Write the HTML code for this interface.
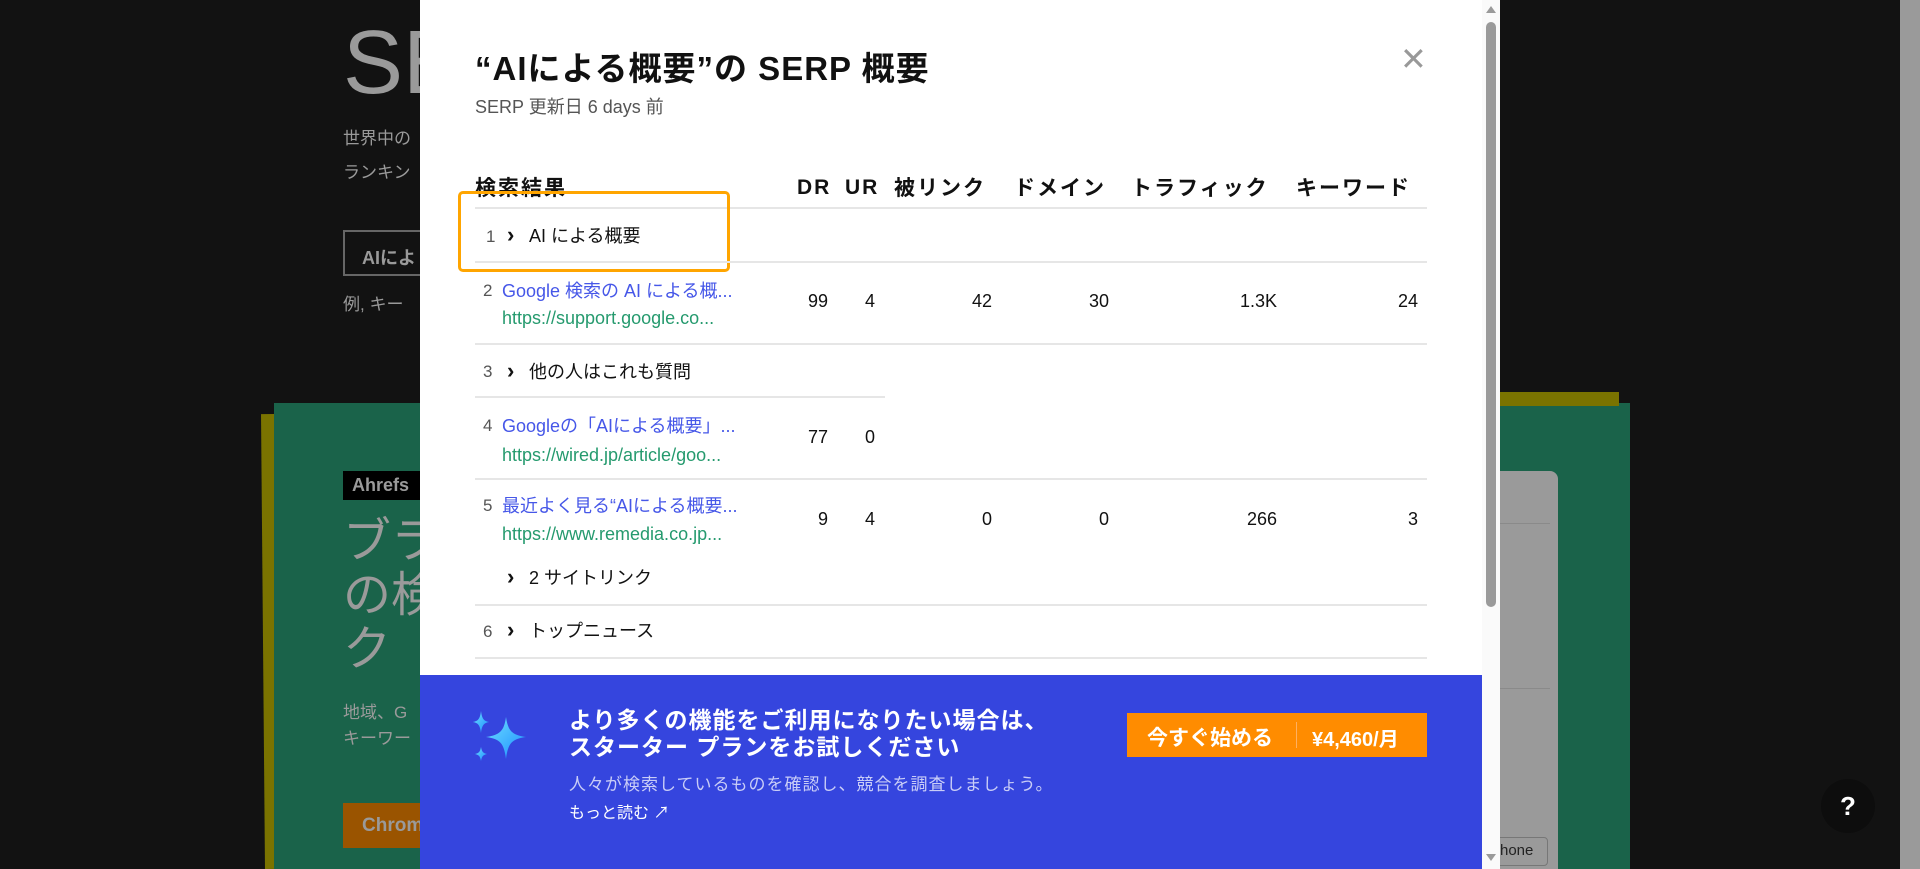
<!DOCTYPE html>
<html><head><meta charset="utf-8"><style>
*{margin:0;padding:0;box-sizing:border-box}
body{width:1920px;height:869px;overflow:hidden;background:#121212;position:relative;font-family:"Liberation Sans","Noto Sans CJK JP",sans-serif}
.a{position:absolute;white-space:nowrap}
.g{color:#9a9a9a}
.modal{position:absolute;left:420px;top:0;width:1062px;height:869px;background:#fff}
.hd{font-weight:bold;font-size:21px;color:#111;top:172px;letter-spacing:2px}
.ln{position:absolute;left:55px;width:952px;height:2px;background:#e6e6e6}
.t{font-size:18px;color:#111}
.num{font-size:17px;color:#555}
.lk{font-size:18px;color:#4657e8}
.ur{font-size:18px;color:#259a6e}
.v{font-size:18px;color:#111;text-align:right;width:80px}
.chev{font-size:22px;font-weight:bold;color:#111;line-height:22px}
</style></head><body>
<div class="a g" style="left:343px;top:12px;font-size:90px;">SE</div>
<div class="a g" style="left:343px;top:124px;font-size:17px">世界中の</div>
<div class="a g" style="left:343px;top:158px;font-size:17px">ランキン</div>
<div class="a" style="left:343px;top:230px;width:100px;height:46px;border:2px solid #666"></div>
<div class="a g" style="left:362px;top:244px;font-size:18px;font-weight:bold">AIによ</div>
<div class="a g" style="left:343px;top:290px;font-size:17px">例, キー</div>
<div class="a" style="left:263px;top:414px;width:14px;height:455px;background:#7a7300;transform:rotate(-0.5deg)"></div>
<div class="a" style="left:274px;top:403px;width:1356px;height:466px;background:#1a634a"></div>
<div class="a" style="left:1500px;top:392px;width:119px;height:14px;background:#7a7300"></div>
<div class="a" style="left:343px;top:471px;width:80px;height:29px;background:#000"></div>
<div class="a g" style="left:352px;top:475px;font-size:18px;font-weight:bold">Ahrefs</div>
<div class="a g" style="left:343px;top:515px;font-size:48px;line-height:54px">ブラ<br>の検<br>ク</div>
<div class="a g" style="left:343px;top:700px;font-size:17px;line-height:26px">地域、G<br>キーワー</div>
<div class="a" style="left:343px;top:803px;width:100px;height:45px;background:#9a5400"></div>
<div class="a g" style="left:362px;top:815px;font-size:19px;font-weight:bold">Chrom</div>
<div class="a" style="left:1500px;top:471px;width:58px;height:398px;background:#9a9a9a;border-radius:0 8px 0 0"></div>
<div class="a" style="left:1500px;top:523px;width:50px;height:1px;background:#8a8a8a"></div>
<div class="a" style="left:1500px;top:688px;width:50px;height:1px;background:#8a8a8a"></div>
<div class="a" style="left:1490px;top:837px;width:58px;height:29px;border:1px solid #777;border-radius:4px"></div>
<div class="a" style="left:1500px;top:842px;font-size:15px;color:#222">hone</div>
<div class="a" style="left:1821px;top:779px;width:54px;height:54px;border-radius:50%;background:#0d0d0d;color:#fff;font-size:26px;font-weight:bold;text-align:center;line-height:54px">?</div>
<div class="a" style="left:1900px;top:0;width:20px;height:869px;background:#9a9a9a"></div>
<div class="a" style="left:1482px;top:0;width:18px;height:869px;background:#fafafa"></div>
<div class="a" style="left:1486px;top:22px;width:10px;height:585px;background:#9a9a9a;border-radius:5px"></div>
<div class="a" style="left:1486px;top:6px;width:0;height:0;border-left:5px solid transparent;border-right:5px solid transparent;border-bottom:7px solid #9a9a9a"></div>
<div class="a" style="left:1486px;top:854px;width:0;height:0;border-left:5px solid transparent;border-right:5px solid transparent;border-top:7px solid #9a9a9a"></div>

<div class="modal">
<div class="a" style="left:55px;top:42px;font-size:33px;font-weight:bold;color:#111;letter-spacing:1px">“AIによる概要”の SERP 概要</div>
<div class="a" style="left:55px;top:93px;font-size:18px;color:#555">SERP 更新日 6 days 前</div>
<div class="a" style="left:980px;top:40px;font-size:32px;color:#999">✕</div>

<div class="a hd" style="left:55px">検索結果</div>
<div class="a hd" style="left:377px;top:176px">DR</div>
<div class="a hd" style="left:425px;top:176px">UR</div>
<div class="a hd" style="left:474px">被リンク</div>
<div class="a hd" style="left:594px">ドメイン</div>
<div class="a hd" style="left:711px">トラフィック</div>
<div class="a hd" style="left:876px">キーワード</div>
<div class="ln" style="top:207px"></div>

<div class="a num" style="left:66px;top:227px">1</div>
<div class="a chev" style="left:87px;top:224px">›</div>
<div class="a t" style="left:109px;top:222px">AI による概要</div>
<div class="a" style="left:38px;top:191px;width:272px;height:81px;border:3px solid #ffa500;border-radius:5px"></div>
<div class="ln" style="top:261px"></div>

<div class="a num" style="left:63px;top:281px">2</div>
<div class="a lk" style="left:82px;top:277px">Google 検索の AI による概...</div>
<div class="a ur" style="left:82px;top:308px">https://support.google.co...</div>
<div class="a v" style="left:328px;top:291px">99</div>
<div class="a v" style="left:375px;top:291px">4</div>
<div class="a v" style="left:492px;top:291px">42</div>
<div class="a v" style="left:609px;top:291px">30</div>
<div class="a v" style="left:777px;top:291px">1.3K</div>
<div class="a v" style="left:918px;top:291px">24</div>
<div class="ln" style="top:343px"></div>

<div class="a num" style="left:63px;top:362px">3</div>
<div class="a chev" style="left:87px;top:360px">›</div>
<div class="a t" style="left:109px;top:358px">他の人はこれも質問</div>
<div class="ln" style="top:396px;width:410px"></div>

<div class="a num" style="left:63px;top:416px">4</div>
<div class="a lk" style="left:82px;top:412px">Googleの「AIによる概要」...</div>
<div class="a ur" style="left:82px;top:445px">https://wired.jp/article/goo...</div>
<div class="a v" style="left:328px;top:427px">77</div>
<div class="a v" style="left:375px;top:427px">0</div>
<div class="ln" style="top:478px"></div>

<div class="a num" style="left:63px;top:496px">5</div>
<div class="a lk" style="left:82px;top:492px">最近よく見る“AIによる概要...</div>
<div class="a ur" style="left:82px;top:524px">https://www.remedia.co.jp...</div>
<div class="a v" style="left:328px;top:509px">9</div>
<div class="a v" style="left:375px;top:509px">4</div>
<div class="a v" style="left:492px;top:509px">0</div>
<div class="a v" style="left:609px;top:509px">0</div>
<div class="a v" style="left:777px;top:509px">266</div>
<div class="a v" style="left:918px;top:509px">3</div>
<div class="a chev" style="left:87px;top:566px">›</div>
<div class="a t" style="left:109px;top:564px">2 サイトリンク</div>
<div class="ln" style="top:604px"></div>

<div class="a num" style="left:63px;top:622px">6</div>
<div class="a chev" style="left:87px;top:619px">›</div>
<div class="a t" style="left:109px;top:617px">トップニュース</div>
<div class="ln" style="top:657px"></div>

<div class="a" style="left:0;top:675px;width:1062px;height:194px;background:#3545de">
 <svg class="a" style="left:52px;top:36px" width="58" height="52" viewBox="0 0 58 52">
  <defs><linearGradient id="sg" x1="0" y1="0" x2="1" y2="1"><stop offset="0" stop-color="#6fe0ff"/><stop offset="1" stop-color="#1a8cff"/></linearGradient></defs>
  <path d="M34 6 C36 20 40 24 54 26 C40 28 36 32 34 48 C32 32 28 28 14 26 C28 24 32 20 34 6Z" fill="url(#sg)"/>
  <path d="M9 0 C10 8 12 10 17 11 C12 12 10 14 9 22 C8 14 6 12 1 11 C6 10 8 8 9 0Z" fill="url(#sg)"/>
  <path d="M9 36 C10 41 11 42 15 43 C11 44 10 45 9 50 C8 45 7 44 3 43 C7 42 8 41 9 36Z" fill="url(#sg)"/>
 </svg>
 <div class="a" style="left:149px;top:32px;font-size:23px;font-weight:bold;color:#fff;line-height:27px;letter-spacing:1px">より多くの機能をご利用になりたい場合は、<br>スターター プランをお試しください</div>
 <div class="a" style="left:149px;top:95px;font-size:17px;color:#c9cdf7;letter-spacing:1px">人々が検索しているものを確認し、競合を調査しましょう。</div>
 <div class="a" style="left:149px;top:124px;font-size:16px;color:#fff">もっと読む ↗</div>
 <div class="a" style="left:707px;top:38px;width:300px;height:44px;background:#ff8c00">
  <div class="a" style="left:20px;top:9px;font-size:21px;font-weight:bold;color:#fff">今すぐ始める</div>
  <div class="a" style="left:169px;top:9px;width:1px;height:26px;background:#ffb060"></div>
  <div class="a" style="left:185px;top:10px;font-size:20px;font-weight:bold;color:#fff">¥4,460/月</div>
 </div>
</div>
</div>
</body></html>
